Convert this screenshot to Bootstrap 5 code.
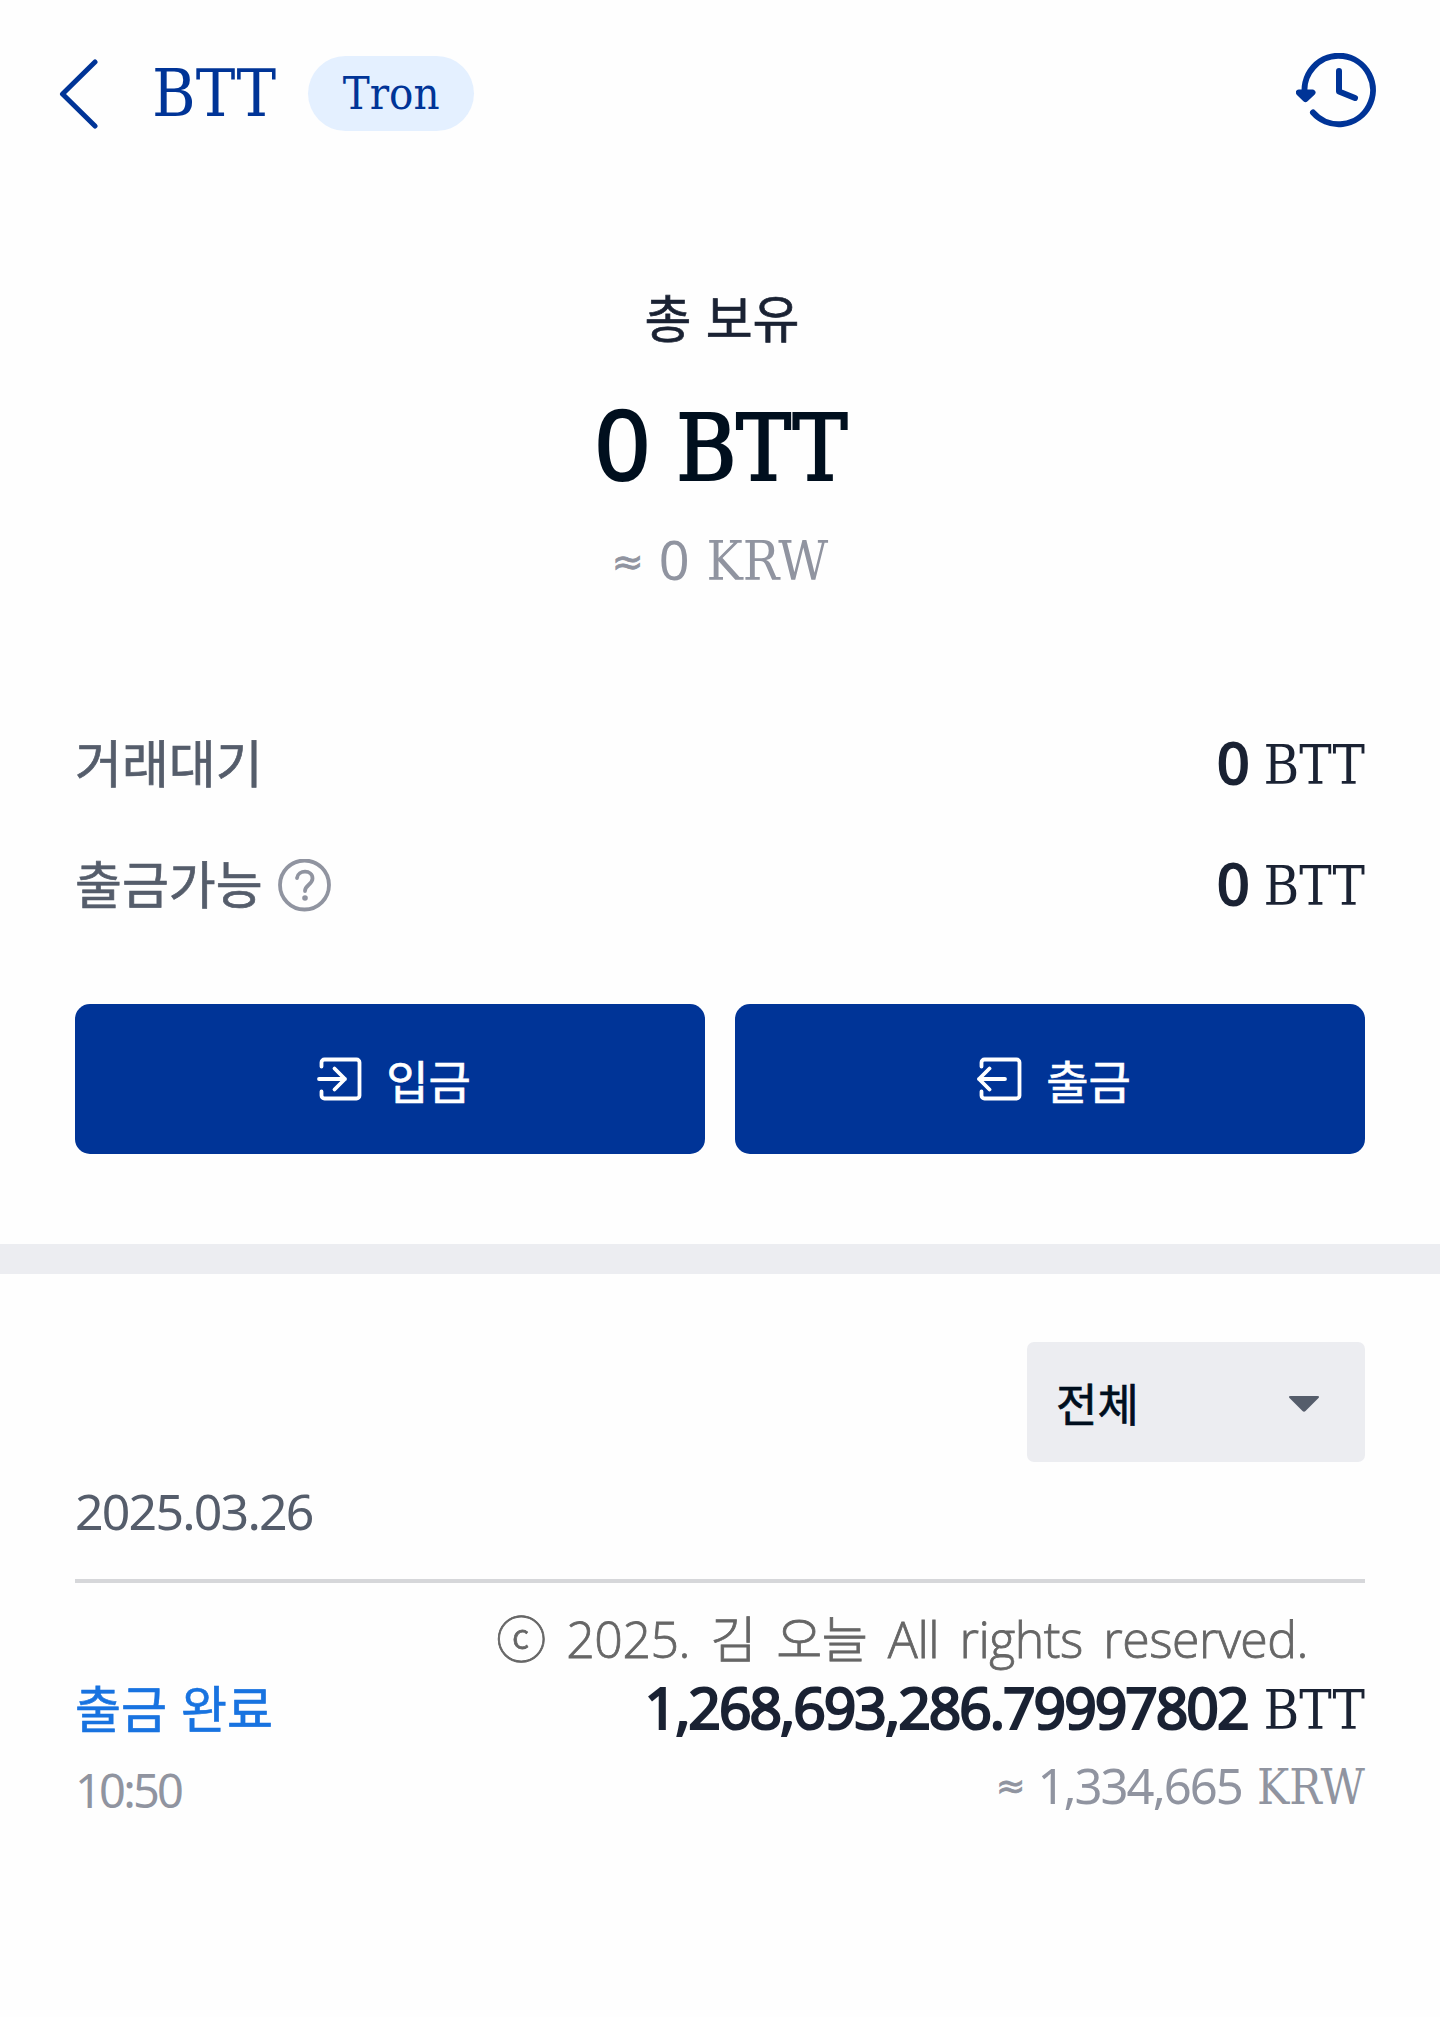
<!DOCTYPE html>
<html lang="ko">
<head>
<meta charset="utf-8">
<meta name="viewport" content="width=device-width, initial-scale=1">
<title>BTT</title>
<link rel="stylesheet" href="https://cdn.jsdelivr.net/npm/bootstrap@5.3.0/dist/css/bootstrap.min.css">
<style>
body{font-family:"Noto Sans","Noto Sans CJK KR",sans-serif;color:#1a2233;background:#fefefe;min-height:2017px;overflow-x:hidden}
.ko{font-family:"Noto Sans CJK KR",sans-serif;font-weight:400;-webkit-text-stroke:.7px currentColor}
.unit{font-family:"DejaVu Serif Condensed","DejaVu Serif",serif;font-stretch:75%}
.ko,.unit,.num,.apx{line-height:1;white-space:nowrap;display:inline-block}
.apx{font-family:"DejaVu Sans",sans-serif;font-size:38px;align-self:center;-webkit-text-stroke:.8px currentColor}
.thick{-webkit-text-stroke:2.2px currentColor}
.navy{color:#003497}
.soft{color:#9094a0}
.slate{color:#555d6b}
.azure{color:#1873e0}
.topbar{height:187px;padding:0 62px 0 59px}
.coin{font-size:66px;margin-left:54px;padding-top:1px}
.chain{height:75px;width:166px;background:#e4f0ff;margin-left:32px;font-size:45px}
.history{margin-bottom:5px}
.total{height:549px}
.total .ko{font-size:51px;height:54px;margin-top:104px;padding-left:4px}
.total .big{font-size:91px;color:#000f1e;margin-top:49px;height:99px;gap:26px;padding-left:2px}
.total .big .num{font-size:97px}
.total .approx{font-size:54px;margin-top:39px;height:60px}
.total .approx .num{margin:0 17px 0 15px}
.page-x{padding-left:75px;padding-right:75px}
.line{height:121px}
.line .ko{font-size:51px}
.line .help{margin:2px 0 0 15px}
.qty{gap:14px;font-size:54px}
.qty .num{font-size:57px}
.line .qty{margin-top:-2px}
.actions{gap:30px;margin-top:26px}
.act{height:150px;border-radius:15px;background:#003497;color:#fff;font-size:46px;gap:24px;padding:0 0 0 8px}
.act:hover{background:#002c82;color:#fff}
.divider{height:30px;background:#ecedf1;margin-top:90px}
.filter{width:338px;height:120px;border-radius:7px;background:#ecedf1;padding:0 44px 0 28px;margin-top:68px;font-size:45px;color:#000f1e}
.filter svg{margin-top:3px}
.date{height:121px;padding-top:12px;border-bottom:4px solid #d6d7da;font-size:50px;letter-spacing:-1.8px}
.copy{font-family:"Open Sans","Noto Sans CJK KR",sans-serif;font-weight:300;font-size:50px;letter-spacing:-.5px;word-spacing:8px;color:#666;line-height:50px;height:50px;margin:31px 57px 0 0;white-space:nowrap;-webkit-text-stroke:.8px currentColor}
.state{font-size:50px;margin-top:17px}
.clock{font-size:47px;letter-spacing:-2.8px;margin-top:36px}
.moved{margin-top:15px}
.moved .num{letter-spacing:-2.050px}
.moved{gap:16px!important}
.worth{font-size:48px;margin-top:23px}
.worth .apx{font-size:35px}
.worth .num{font-size:49px;letter-spacing:-2px;margin:0 15px 0 12px}
</style>
</head>
<body>
<header class="topbar d-flex align-items-center">
  <svg width="39" height="72" viewBox="0 0 39 72" fill="none" stroke="#003497" stroke-width="5" stroke-linecap="round" stroke-linejoin="round"><path d="M36 4 3.500 36 36 68"/></svg>
  <span class="unit coin navy">BTT</span>
  <span class="chain unit navy rounded-pill d-flex align-items-center justify-content-center">Tron</span>
  <svg class="history ms-auto" width="82" height="76" viewBox="0 0 82 76" fill="none" stroke="#003497" stroke-width="6" stroke-linecap="round" stroke-linejoin="round"><path d="M9.500 45A34.200 34.200 0 1 1 17 59.500M2.800 39.500 9.500 46 16.500 39.500Z" /><path d="M43 18V38.500L59 45"/></svg>
</header>
<section class="total d-flex flex-column align-items-center">
  <div class="ko">총 보유</div>
  <div class="big d-flex align-items-baseline thick"><span class="num">0</span><span class="unit">BTT</span></div>
  <div class="approx soft d-flex align-items-baseline"><span class="apx">≈</span><span class="num">0</span><span class="unit">KRW</span></div>
</section>
<section class="page-x">
  <div class="line d-flex justify-content-between align-items-start">
    <span class="ko slate">거래대기</span>
    <span class="qty d-flex align-items-baseline"><span class="num thick">0</span><span class="unit">BTT</span></span>
  </div>
  <div class="line d-flex justify-content-between align-items-start">
    <span class="d-flex align-items-start"><span class="ko slate">출금가능</span>
      <svg class="help" width="53" height="53" viewBox="0 0 53 53" fill="none" stroke="#9094a0" stroke-width="3.800" stroke-linecap="round"><circle cx="26.500" cy="26" r="24.500"/><path d="M19 19C20 10.500 34.500 10.500 34.500 19.500C34.500 25.500 27 26 27 32"/><circle cx="27" cy="39" r="2.800" fill="#9094a0" stroke="none"/></svg></span>
    <span class="qty d-flex align-items-baseline"><span class="num thick">0</span><span class="unit">BTT</span></span>
  </div>
  <div class="actions d-flex">
    <button class="btn act flex-fill d-flex align-items-center justify-content-center">
      <svg width="45" height="44" viewBox="0 0 45 44" fill="none" stroke="#fff" stroke-width="3.800" stroke-linecap="round" stroke-linejoin="round"><path d="M4.500 9.500V5.500a3 3 0 0 1 3-3H39.500a3 3 0 0 1 3 3V38.500a3 3 0 0 1-3 3H7.500a3 3 0 0 1-3-3V34.500M2 22H28M17.500 11.500 28 22 17.500 32.500"/></svg>
      <span class="ko">입금</span>
    </button>
    <button class="btn act flex-fill d-flex align-items-center justify-content-center">
      <svg width="45" height="44" viewBox="0 0 45 44" fill="none" stroke="#fff" stroke-width="3.800" stroke-linecap="round" stroke-linejoin="round"><path d="M4.500 9.500V5.500a3 3 0 0 1 3-3H39.500a3 3 0 0 1 3 3V38.500a3 3 0 0 1-3 3H7.500a3 3 0 0 1-3-3V34.500M28 22H2M12.500 11.500 2 22 12.500 32.500"/></svg>
      <span class="ko">출금</span>
    </button>
  </div>
</section>
<div class="divider"></div>
<section class="page-x">
  <button class="btn filter d-flex justify-content-between ms-auto align-items-center">
    <span class="ko">전체</span>
    <svg width="32" height="18" viewBox="0 0 32 18" fill="#555d6b"><path d="M2.500 1H29.500Q32 1 30.500 3L17.500 16Q16 17.500 14.500 16L1.500 3Q0 1 2.500 1Z"/></svg>
  </button>
  <div class="date slate"><span class="num">2025.03.26</span></div>
  <div class="copy text-end">ⓒ 2025. 김 오늘 All rights reserved.</div>
  <div class="d-flex justify-content-between align-items-start">
    <div class="d-flex flex-column align-items-start">
      <span class="ko azure state">출금 완료</span>
      <span class="num soft clock">10:50</span>
    </div>
    <div class="d-flex flex-column align-items-end">
      <span class="qty moved d-flex align-items-baseline"><span class="num thick">1,268,693,286.79997802</span><span class="unit">BTT</span></span>
      <span class="worth soft d-flex align-items-baseline"><span class="apx">≈</span><span class="num">1,334,665</span><span class="unit">KRW</span></span>
    </div>
  </div>
</section>
<script src="https://cdn.jsdelivr.net/npm/bootstrap@5.3.0/dist/js/bootstrap.bundle.min.js"></script>
</body>
</html>
